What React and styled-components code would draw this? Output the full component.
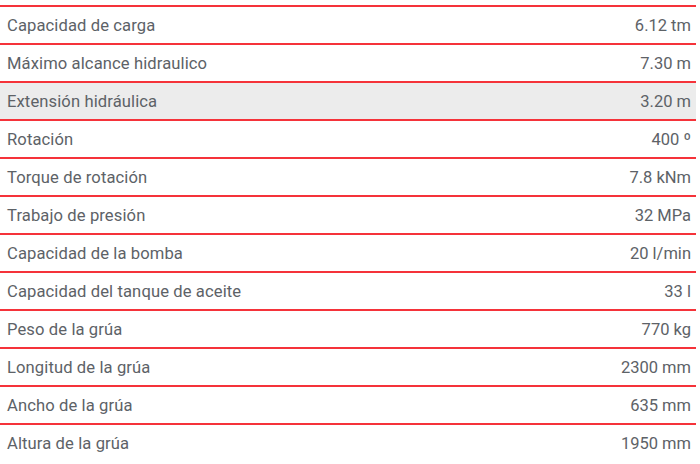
import React from "react";
import styled, { createGlobalStyle } from "styled-components";

const Global = createGlobalStyle`
  html, body { margin: 0; padding: 0; background: #fff; }
  body { font-family: "Roboto", "Noto Sans", sans-serif; }
`;

const Table = styled.div`
  margin-top: 5px;
  width: 696px;
  border-top: 2px solid #f5333a;
  display: flex;
  flex-direction: column;
`;

const Row = styled.div`
  height: 36px;
  display: flex;
  align-items: center;
  justify-content: space-between;
  padding: 0 5px 0 7px;
  background: ${(p) => (p.$active ? "#ececec" : "#fff")};
  border-bottom: 2px solid ${(p) => (p.$last ? "transparent" : "#f5333a")};
`;

const Label = styled.span`
  font-size: 16.6px;
  letter-spacing: 0.1px;
  color: #5d6267;
`;

const Value = styled.span`
  font-size: 16.5px;
  color: #5d6267;
`;

const data = [
  ["Capacidad de carga", "6.12 tm"],
  ["Máximo alcance hidraulico", "7.30 m"],
  ["Extensión hidráulica", "3.20 m"],
  ["Rotación", "400 º"],
  ["Torque de rotación", "7.8 kNm"],
  ["Trabajo de presión", "32 MPa"],
  ["Capacidad de la bomba", "20 l/min"],
  ["Capacidad del tanque de aceite", "33 l"],
  ["Peso de la grúa", "770 kg"],
  ["Longitud de la grúa", "2300 mm"],
  ["Ancho de la grúa", "635 mm"],
  ["Altura de la grúa", "1950 mm"],
];

export default function App() {
  return (
    <>
      <Global />
      <Table>
        {data.map(([k, v], i) => (
          <Row key={k} $active={i === 2} $last={i === data.length - 1}>
            <Label>{k}</Label>
            <Value>{v}</Value>
          </Row>
        ))}
      </Table>
    </>
  );
}
